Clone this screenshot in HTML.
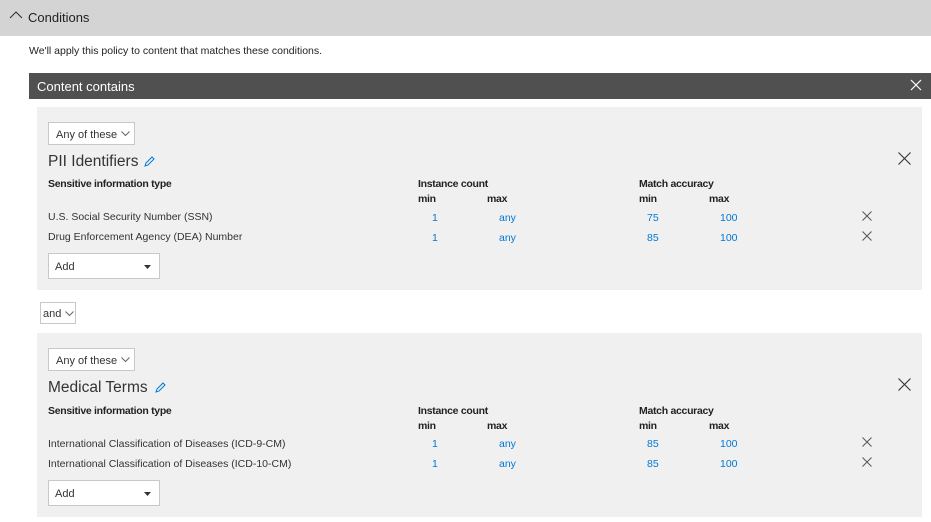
<!DOCTYPE html>
<html><head><style>
body{margin:0;width:931px;height:522px;background:#fff;font-family:"Liberation Sans",sans-serif;color:#333;position:relative;overflow:hidden}
.a{position:absolute;white-space:nowrap}
.hdr{left:0;top:0;width:931px;height:36px;background:#d4d4d4}
.bar{left:29px;top:73px;width:902px;height:26px;background:#505050;color:#fff;font-size:13px}
.panel{left:37px;width:885px;background:#f0f0f0}
.dd{background:#fff;border:1px solid #c8c8c8;font-size:11px;box-sizing:border-box}
.b{font-weight:bold;font-size:10.5px;color:#222;letter-spacing:-0.3px}
.t{font-size:10.5px;color:#333}
.l{font-size:10.5px;color:#0078d4}
.title{font-size:15.5px;color:#333}
</style></head><body>
<div class="a hdr"></div>
<svg class="a" style="left:9px;top:10px" width="14" height="9"><path d="M1 8 L7 2 L13 8" fill="none" stroke="#333" stroke-width="1.1"/></svg>
<div class="a" style="left:28px;top:10px;font-size:13px;color:#222">Conditions</div>
<div class="a t" style="left:29px;top:45px;font-size:10.5px;color:#222">We'll apply this policy to content that matches these conditions.</div>
<div class="a bar"><span class="a" style="left:8px;top:6px">Content contains</span>
<svg class="a" style="left:881px;top:6px" width="12" height="12"><path d="M1 1L11 11M11 1L1 11" stroke="#fff" stroke-width="1.2"/></svg></div>

<div class="a panel" style="top:107px;height:183px"></div>
<div class="a panel" style="top:333px;height:184px"></div>

<div class="a dd" style="left:40px;top:302px;width:36px;height:22px"><span class="a" style="left:2px;top:5px">and</span>
<svg class="a" style="left:24px;top:8px" width="9" height="6"><path d="M0.5 0.5L4.5 4.5L8.5 0.5" fill="none" stroke="#666"/></svg></div>

<div class="a" style="left:0;top:0">
<div class="a dd" style="left:48px;top:122px;width:87px;height:23px"><span class="a" style="left:7px;top:6px">Any of these</span><svg class="a" style="left:72px;top:8px" width="9" height="6"><path d="M0.5 0.5L4.5 4.5L8.5 0.5" fill="none" stroke="#666"/></svg></div>
<div class="a title" style="left:48px;top:153px">PII Identifiers</div>
<svg class="a" style="left:144px;top:156px" width="11" height="11"><path d="M1 10L2 7L8 1L10 3L4 9Z" fill="none" stroke="#0078d4"/></svg>
<svg class="a" style="left:898px;top:152px" width="13" height="13"><path d="M0.5 0.5L12.5 12.5M12.5 0.5L0.5 12.5" stroke="#333" stroke-width="1.1"/></svg>
<div class="a b" style="left:48px;top:178px">Sensitive information type</div>
<div class="a b" style="left:418px;top:178px">Instance count</div>
<div class="a b" style="left:639px;top:178px">Match accuracy</div>
<div class="a b" style="left:418px;top:193px">min</div><div class="a b" style="left:487px;top:193px">max</div>
<div class="a b" style="left:639px;top:193px">min</div><div class="a b" style="left:709px;top:193px">max</div>
<div class="a t" style="left:48px;top:211px">U.S. Social Security Number (SSN)</div>
<div class="a t" style="left:48px;top:231px">Drug Enforcement Agency (DEA) Number</div>
<div class="a l" style="left:432px;top:212px">1</div><div class="a l" style="left:499px;top:212px">any</div><div class="a l" style="left:647px;top:212px">75</div><div class="a l" style="left:720px;top:212px">100</div>
<div class="a l" style="left:432px;top:232px">1</div><div class="a l" style="left:499px;top:232px">any</div><div class="a l" style="left:647px;top:232px">85</div><div class="a l" style="left:720px;top:232px">100</div>
<svg class="a" style="left:862px;top:211px" width="10" height="10"><path d="M0.5 0.5L9.5 9.5M9.5 0.5L0.5 9.5" stroke="#555"/></svg>
<svg class="a" style="left:862px;top:231px" width="10" height="10"><path d="M0.5 0.5L9.5 9.5M9.5 0.5L0.5 9.5" stroke="#555"/></svg>
<div class="a dd" style="left:48px;top:253px;width:112px;height:26px"><span class="a" style="left:6px;top:7px">Add</span><svg class="a" style="left:95px;top:11px" width="7" height="4"><path d="M0 0H7L3.5 4Z" fill="#333"/></svg></div>
</div>

<div class="a" style="left:0;top:226px">
<div class="a dd" style="left:48px;top:122px;width:87px;height:23px"><span class="a" style="left:7px;top:6px">Any of these</span><svg class="a" style="left:72px;top:8px" width="9" height="6"><path d="M0.5 0.5L4.5 4.5L8.5 0.5" fill="none" stroke="#666"/></svg></div>
<div class="a title" style="left:48px;top:153px">Medical Terms</div>
<svg class="a" style="left:155px;top:156px" width="11" height="11"><path d="M1 10L2 7L8 1L10 3L4 9Z" fill="none" stroke="#0078d4"/></svg>
<svg class="a" style="left:898px;top:152px" width="13" height="13"><path d="M0.5 0.5L12.5 12.5M12.5 0.5L0.5 12.5" stroke="#333" stroke-width="1.1"/></svg>
<div class="a b" style="left:48px;top:179px">Sensitive information type</div>
<div class="a b" style="left:418px;top:179px">Instance count</div>
<div class="a b" style="left:639px;top:179px">Match accuracy</div>
<div class="a b" style="left:418px;top:194px">min</div><div class="a b" style="left:487px;top:194px">max</div>
<div class="a b" style="left:639px;top:194px">min</div><div class="a b" style="left:709px;top:194px">max</div>
<div class="a t" style="left:48px;top:212px">International Classification of Diseases (ICD-9-CM)</div>
<div class="a t" style="left:48px;top:232px">International Classification of Diseases (ICD-10-CM)</div>
<div class="a l" style="left:432px;top:212px">1</div><div class="a l" style="left:499px;top:212px">any</div><div class="a l" style="left:647px;top:212px">85</div><div class="a l" style="left:720px;top:212px">100</div>
<div class="a l" style="left:432px;top:232px">1</div><div class="a l" style="left:499px;top:232px">any</div><div class="a l" style="left:647px;top:232px">85</div><div class="a l" style="left:720px;top:232px">100</div>
<svg class="a" style="left:862px;top:211px" width="10" height="10"><path d="M0.5 0.5L9.5 9.5M9.5 0.5L0.5 9.5" stroke="#555"/></svg>
<svg class="a" style="left:862px;top:231px" width="10" height="10"><path d="M0.5 0.5L9.5 9.5M9.5 0.5L0.5 9.5" stroke="#555"/></svg>
<div class="a dd" style="left:48px;top:254px;width:112px;height:26px"><span class="a" style="left:6px;top:7px">Add</span><svg class="a" style="left:95px;top:11px" width="7" height="4"><path d="M0 0H7L3.5 4Z" fill="#333"/></svg></div>
</div>
</body></html>
